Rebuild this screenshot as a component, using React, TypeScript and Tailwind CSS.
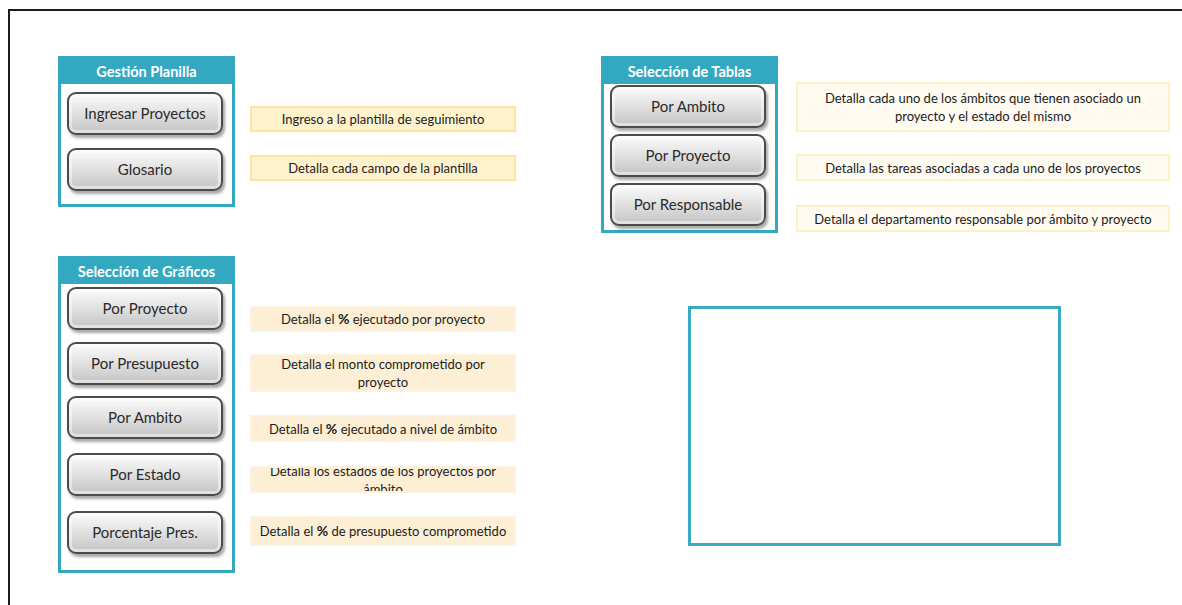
import type { ReactNode } from "react";

const font = { fontFamily: "Lato, 'Open Sans', sans-serif" };

function Panel({ title, className, children }: { title: string; className: string; children: ReactNode }) {
  return (
    <section className={`flex w-[177px] shrink-0 flex-col border-[3px] border-[#33a9c1] bg-white ${className}`}>
      <header className="flex h-[25px] items-center justify-center bg-[#33a9c1] text-[14.5px] font-bold text-white">
        {title}
      </header>
      <div className="flex flex-col pl-[6px]">{children}</div>
    </section>
  );
}

function SheetButton({ label, className }: { label: string; className: string }) {
  return (
    <button
      type="button"
      className={`flex h-[43px] w-[156px] items-center justify-center rounded-[9px] border-2 border-[#4b4b4b] bg-[linear-gradient(180deg,#fbfbfb_0%,#e3e3e3_45%,#c4c4c4_100%)] text-[15px] text-[#2a2a2a] shadow-[2px_3px_3px_rgba(0,0,0,0.35),inset_0_0_0_3px_rgba(255,255,255,0.45)] ${className}`}
    >
      {label}
    </button>
  );
}

function Note({ children, className }: { children: ReactNode; className: string }) {
  return (
    <div className={`flex items-center justify-center overflow-hidden border-2 text-center text-[13px] leading-[18px] text-[#1c1c1c] ${className}`}>
      <p>{children}</p>
    </div>
  );
}

const pct = <b className="text-[14px]">%</b>;

export default function App() {
  return (
    <div className="h-[605px] w-[1182px] overflow-hidden bg-white" style={font}>
      <div className="ml-[8px] mt-[9px] h-[600px] w-[1180px] border-l-2 border-t-2 border-[#1e1e1e] pl-[48px]">
        <div className="mt-[45px] flex items-start">
          <Panel title="Gestión Planilla" className="h-[151px]">
            <SheetButton label="Ingresar Proyectos" className="mt-[8px]" />
            <SheetButton label="Glosario" className="mt-[13px]" />
          </Panel>
          <div className="ml-[15px] flex w-[266px] flex-col pt-[50px]">
            <Note className="h-[26px] border-[#fde59d] bg-[#fff2cc] px-2">Ingreso a la plantilla de seguimiento</Note>
            <Note className="mt-[23px] h-[26px] border-[#fde59d] bg-[#fff2cc] px-2">Detalla cada campo de la plantilla</Note>
          </div>
          <Panel title="Selección de Tablas" className="ml-[85px] h-[177px]">
            <SheetButton label="Por Ambito" className="mt-[1px]" />
            <SheetButton label="Por Proyecto" className="mt-[6px]" />
            <SheetButton label="Por Responsable" className="mt-[6px]" />
          </Panel>
          <div className="ml-[18px] flex w-[374px] flex-col pt-[26px]">
            <Note className="h-[50px] border-[#fff0c6] bg-[#fffbf0] px-2">
              Detalla cada uno de los ámbitos que tienen asociado un proyecto y el estado del mismo
            </Note>
            <Note className="mt-[22px] h-[27px] border-[#fff0c6] bg-[#fffbf0] px-2">
              Detalla las tareas asociadas a cada uno de los proyectos
            </Note>
            <Note className="mt-[24px] h-[27px] border-[#fff0c6] bg-[#fffbf0] px-2">
              Detalla el departamento responsable por ámbito y proyecto
            </Note>
          </div>
        </div>

        <div className="mt-[23px] flex items-start">
          <Panel title="Selección de Gráficos" className="h-[317px]">
            <SheetButton label="Por Proyecto" className="mt-[3px]" />
            <SheetButton label="Por Presupuesto" className="mt-[12px]" />
            <SheetButton label="Por Ambito" className="mt-[11px]" />
            <SheetButton label="Por Estado" className="mt-[14px]" />
            <SheetButton label="Porcentaje Pres." className="mt-[15px]" />
          </Panel>
          <div className="ml-[15px] flex w-[266px] flex-col pt-[50px]">
            <Note className="h-[26px] border-[#fdf2df] bg-[#fdefd6] px-2">Detalla el {pct} ejecutado por proyecto</Note>
            <Note className="mt-[22px] h-[38px] border-[#fdf2df] bg-[#fdefd6] px-[28px]">Detalla el monto comprometido por proyecto</Note>
            <Note className="mt-[23px] h-[27px] border-[#fdf2df] bg-[#fdefd6] px-2">Detalla el {pct} ejecutado a nivel de ámbito</Note>
            <Note className="mt-[24px] h-[27px] border-[#fdf2df] bg-[#fdefd6] px-[16px]">Detalla los estados de los proyectos por ámbito</Note>
            <Note className="mt-[23px] h-[30px] whitespace-nowrap border-[#fdf2df] bg-[#fdefd6] px-1">Detalla el {pct} de presupuesto comprometido</Note>
          </div>
          <div className="ml-[172px] mt-[50px] h-[240px] w-[373px] border-[3px] border-[#3aaac3] bg-white" />
        </div>
      </div>
    </div>
  );
}
